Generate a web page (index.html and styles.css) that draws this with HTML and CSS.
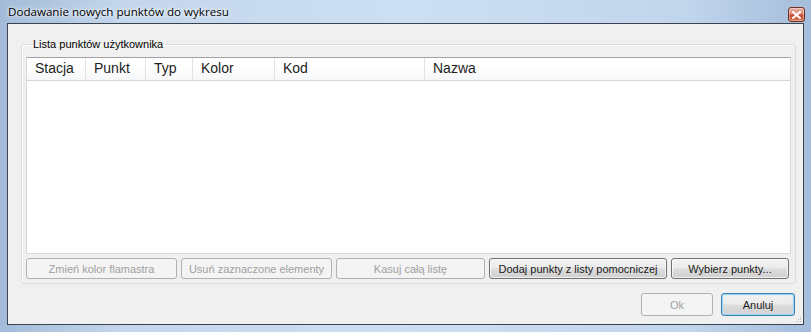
FILE: index.html
```html
<!DOCTYPE html>
<html lang="pl">
<head>
    <meta charset="utf-8">
    <title>Dodawanie nowych punktów do wykresu</title>
    <link rel="stylesheet" href="styles.css">
</head>
<body>
    <div class="window">
        <div class="titlebar">
            <span class="title">Dodawanie nowych punktów do wykresu</span>
            <button class="close" title="Zamknij">
                <svg width="9" height="8" viewBox="0 0 9 8">
                    <path d="M1 1 L8 7 M8 1 L1 7" stroke="#fff" stroke-width="2" stroke-linecap="square"/>
                </svg>
            </button>
        </div>
        <div class="client">
            <fieldset class="group">
                <legend>Lista punktów użytkownika</legend>
                <div class="listview">
                    <div class="header">
                        <div class="col col-stacja">Stacja</div>
                        <div class="col col-punkt">Punkt</div>
                        <div class="col col-typ">Typ</div>
                        <div class="col col-kolor">Kolor</div>
                        <div class="col col-kod">Kod</div>
                        <div class="col col-nazwa">Nazwa</div>
                    </div>
                </div>
                <div class="actions">
                    <button class="btn w-kolor" disabled>Zmień kolor flamastra</button>
                    <button class="btn w-usun" disabled>Usuń zaznaczone elementy</button>
                    <button class="btn w-kasuj" disabled>Kasuj całą listę</button>
                    <button class="btn w-dodaj">Dodaj punkty z listy pomocniczej</button>
                    <button class="btn w-wybierz">Wybierz punkty...</button>
                </div>
            </fieldset>
            <div class="footer">
                <button class="btn w-ok" disabled>Ok</button>
                <button class="btn btn-default w-anuluj">Anuluj</button>
                <div class="grip">
                    <svg width="8" height="8" viewBox="0 0 8 8">
                        <rect x="5" y="1" width="1" height="1" fill="#b8b8b8"/>
                        <rect x="3" y="3" width="1" height="1" fill="#b8b8b8"/>
                        <rect x="5" y="3" width="1" height="1" fill="#b8b8b8"/>
                        <rect x="1" y="5" width="1" height="1" fill="#b8b8b8"/>
                        <rect x="3" y="5" width="1" height="1" fill="#b8b8b8"/>
                        <rect x="5" y="5" width="1" height="1" fill="#b8b8b8"/>
                    </svg>
                </div>
            </div>
        </div>
    </div>
</body>
</html>
```

FILE: styles.css
```css
body {
    margin: 0;
    background: #b9cde4;
    font-family: 'Liberation Sans', Arial, sans-serif;
}

.window {
    width: 811px;
    height: 332px;
    box-sizing: border-box;
    padding: 0 7px 7px 7px;
    display: flex;
    flex-direction: column;
    background: linear-gradient(90deg, #a3bbd8 0%, #c3d6ec 15%, #cddff2 50%, #c1d5ec 85%, #a5bdda 100%);
}

.titlebar {
    height: 23px;
    display: flex;
    align-items: flex-start;
    justify-content: space-between;
}

.title {
    font-family: 'Open Sans', 'Noto Sans', sans-serif;
    font-size: 11.6px;
    line-height: 14px;
    margin: 5px 0 0 1px;
    color: #000000;
    text-shadow: 0 0 6px #ffffff, 0 0 3px #ffffff;
}

.close {
    width: 17px;
    height: 15px;
    margin: 7px -1px 0 0;
    padding: 0;
    border: 1px solid #6d2f25;
    border-radius: 3px;
    background: linear-gradient(#e8b0a4 0%, #d98874 45%, #c44a31 55%, #d5784f 100%);
    box-shadow: inset 0 0 0 1px rgba(255, 255, 255, 0.35);
    display: flex;
    align-items: center;
    justify-content: center;
}

.client {
    flex: 1;
    border: 1px solid #3b4350;
    background: #f0f0f0;
    display: flex;
    flex-direction: column;
}

.group {
    margin: 14px 7px 0 13px;
    padding: 6px 4px 4px 4px;
    border: 1px solid #d5dfe5;
    border-radius: 3px;
    box-shadow: inset 1px 1px 0 #ffffff;
    min-width: 0;
}

.group legend {
    font-size: 11px;
    line-height: 13px;
    padding: 0 2px;
    margin-left: 5px;
    color: #000000;
}

.listview {
    height: 195px;
    background: #ffffff;
    border: 1px solid #d9d9d9;
    border-top-color: #a3a3a3;
}

.header {
    display: flex;
    height: 22px;
    border-bottom: 1px solid #d5d5d5;
    background: linear-gradient(#ffffff 0%, #ffffff 40%, #f6f7f8 100%);
}

.col {
    box-sizing: border-box;
    padding-left: 8px;
    font-size: 14px;
    line-height: 21px;
    color: #1e1e1e;
    border-right: 1px solid #e3e4e6;
}

.col-stacja { width: 59px; }
.col-punkt { width: 60px; }
.col-typ { width: 47px; }
.col-kolor { width: 82px; }
.col-kod { width: 150px; }
.col-nazwa { flex: 1; border-right: none; }

.actions {
    display: flex;
    gap: 4px;
    margin-top: 4px;
}

.btn {
    box-sizing: border-box;
    height: 21px;
    padding: 0;
    font-family: 'Liberation Sans', Arial, sans-serif;
    font-size: 11px;
    color: #1a1a1a;
    border: 1px solid #707070;
    border-radius: 3px;
    background: linear-gradient(#f2f2f2 0%, #ebebeb 48%, #dddddd 52%, #cfcfcf 100%);
    box-shadow: inset 0 0 0 1px rgba(255, 255, 255, 0.7);
}

.btn:disabled {
    color: #a0a0a0;
    border-color: #adb2b5;
    background: #f4f4f4;
    box-shadow: none;
}

.w-kolor { width: 151px; }
.w-usun { width: 151px; }
.w-kasuj { width: 149px; }
.w-dodaj { width: 178px; }
.w-wybierz { width: 118px; }

.footer {
    flex: 1;
    display: flex;
    justify-content: flex-end;
    align-items: flex-start;
    padding-top: 9px;
    gap: 8px;
}

.footer .btn {
    height: 23px;
}

.w-ok { width: 72px; }
.w-anuluj { width: 74px; margin-right: -8px; }

.btn-default {
    border-color: #3c7fb1;
    box-shadow: inset 0 0 0 1px #9fd4ef, inset 0 0 2px 1px #c8ebfb;
}

.grip {
    align-self: flex-end;
    width: 8px;
    height: 8px;
    display: flex;
}
```
